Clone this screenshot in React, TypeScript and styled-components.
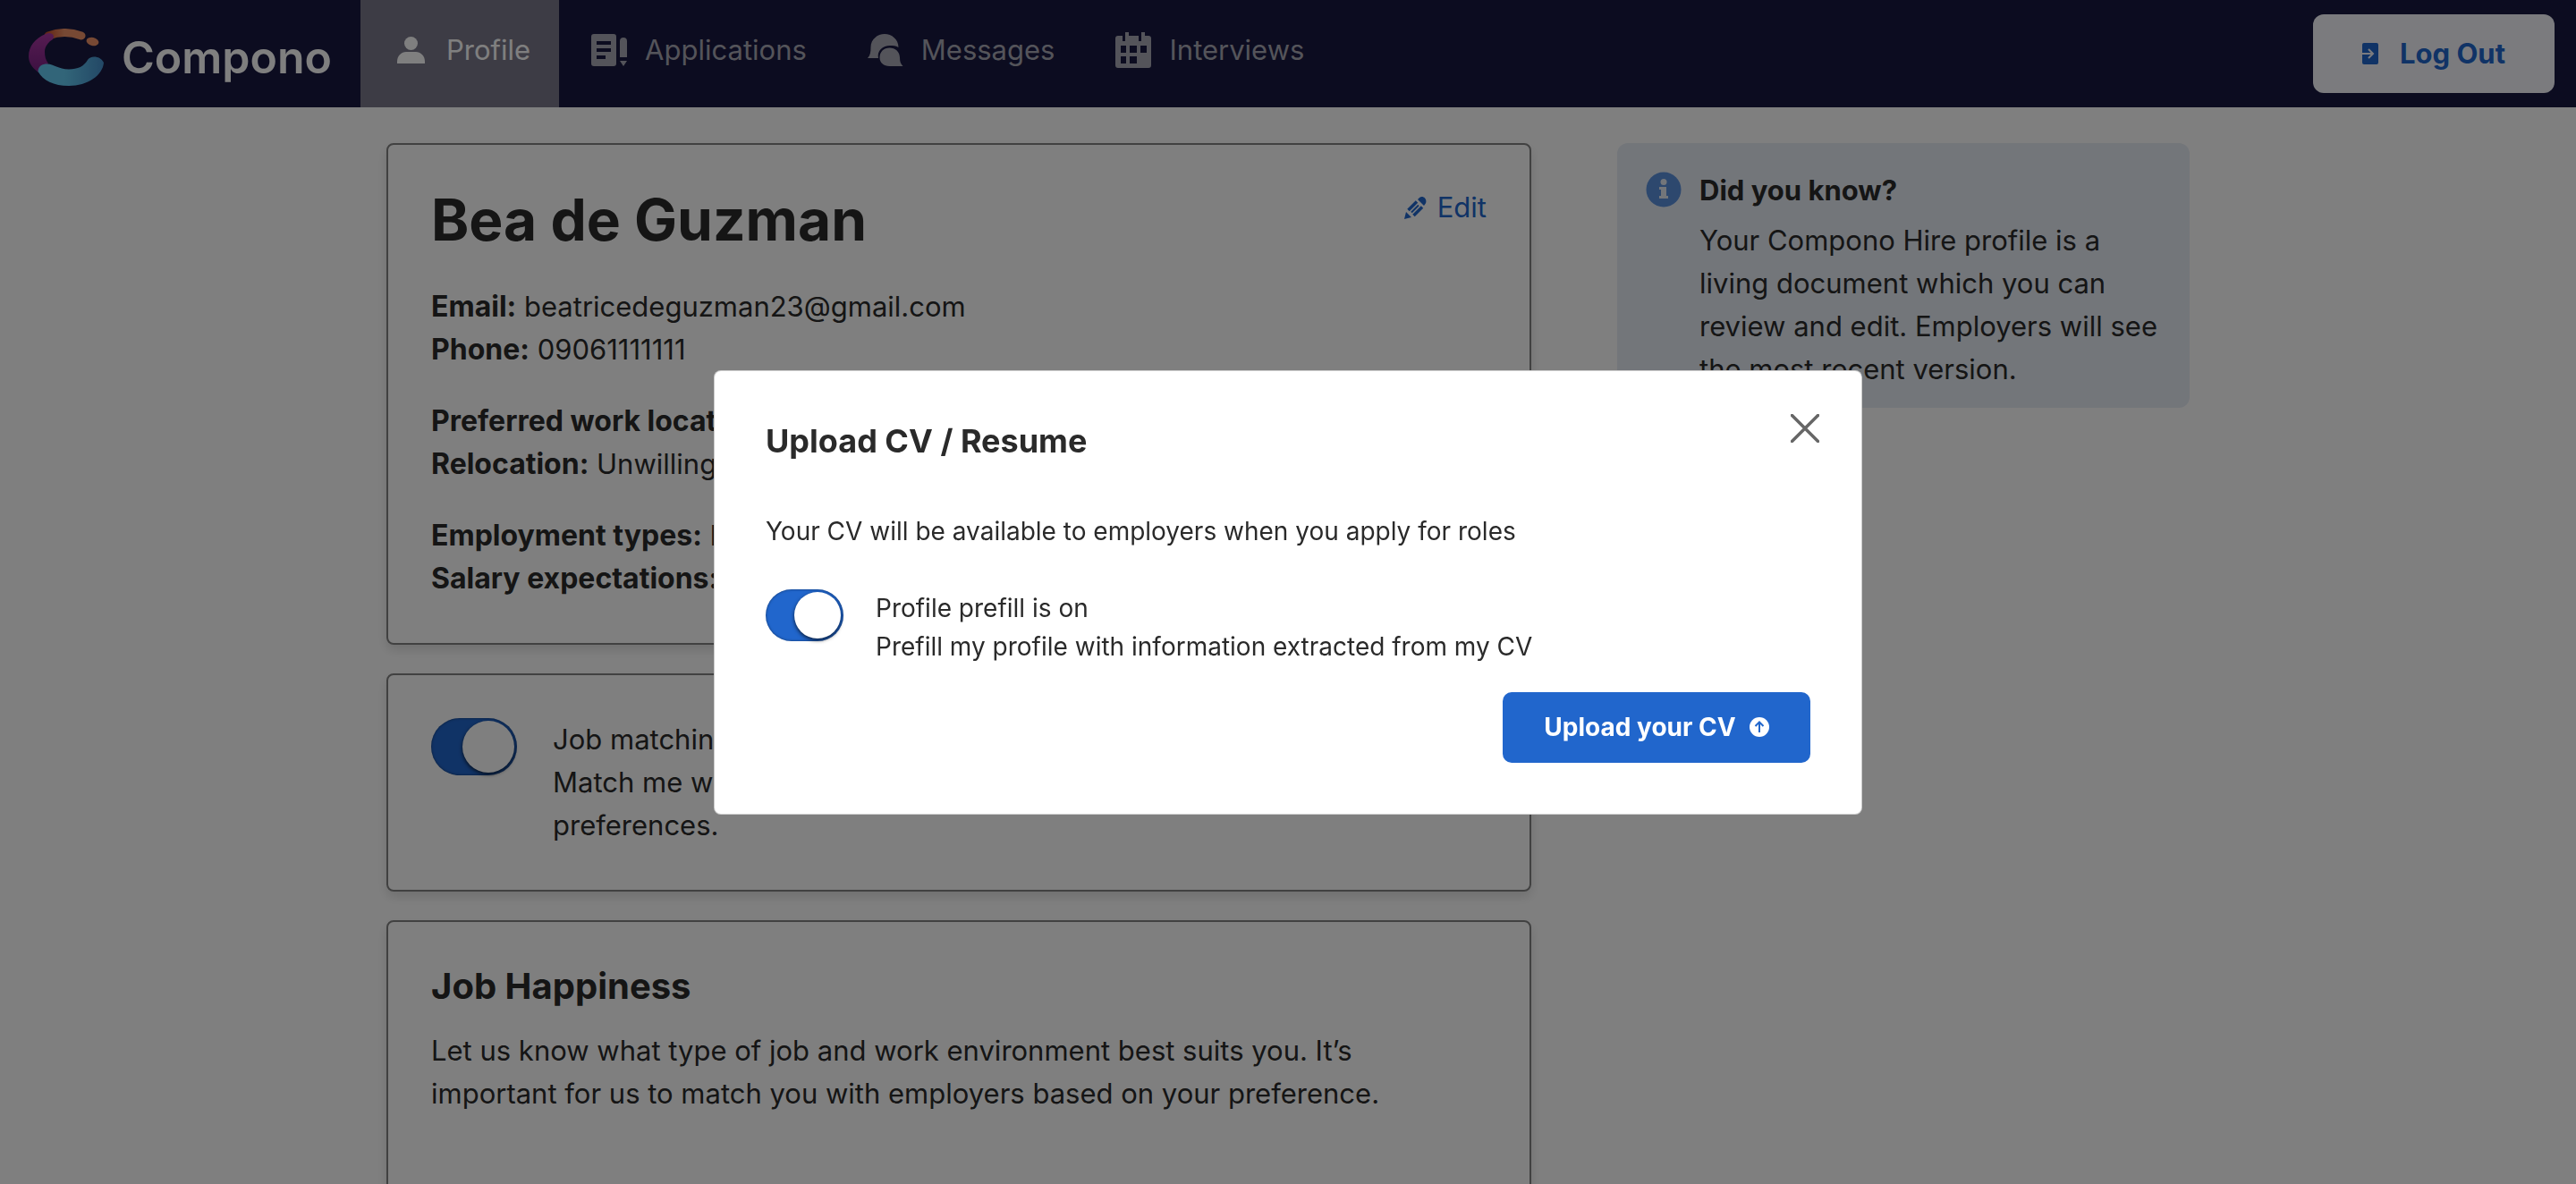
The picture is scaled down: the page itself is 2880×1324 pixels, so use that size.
import React from "react";
import styled, { createGlobalStyle } from "styled-components";

const GlobalStyle = createGlobalStyle`
  *, *::before, *::after { box-sizing: border-box; }
  body {
    margin: 0;
    height: 100vh;
    overflow: hidden;
    background: #fff;
    color: #2a2a2a;
    font-family: Inter, "Open Sans", sans-serif;
    font-size: 31px;
    line-height: 48px;
  }
  h1, h2, p { margin: 0; }
  button, input { font: inherit; margin: 0; }
`;

const Header = styled.header`
  display: flex;
  align-items: stretch;
  height: 120px;
  padding-right: 24px;
  background: #181840;
`;

const Brand = styled.a`
  display: flex;
  align-items: center;
  gap: 20px;
  padding: 8px 32px 0;
  color: #fff;
  font-size: 50px;
  font-weight: 600;
  line-height: 60px;
  text-decoration: none;
`;

const Nav = styled.nav`
  display: flex;
  flex: 1;
`;

const NavLink = styled.a<{ $active?: boolean }>`
  display: flex;
  align-items: center;
  gap: 20px;
  padding: 0 32px 8px 36px;
  color: ${(p) => (p.$active ? "#fff" : "#a9a9b4")};
  background: ${(p) => (p.$active ? "#7a788a" : "transparent")};
  text-decoration: none;
`;

const LogOut = styled.button`
  display: flex;
  align-items: center;
  align-self: center;
  justify-content: center;
  gap: 24px;
  width: 270px;
  height: 88px;
  border: 0;
  border-radius: 12px;
  background: #f6f7fc;
  color: #2166cc;
  font-weight: 700;
`;

const Main = styled.main`
  display: grid;
  grid-template-columns: 2fr 1fr;
  gap: 96px;
  align-items: start;
  width: 70%;
  margin: 0 auto;
  padding-top: 40px;
`;

const Column = styled.div`
  display: flex;
  flex-direction: column;
  gap: 32px;
`;

const Card = styled.section<{ $tall?: boolean }>`
  min-height: ${(p) => (p.$tall ? "50vh" : "0")};
  padding: 48px;
  border: 2px solid #828282;
  border-radius: 8px;
  box-shadow: 0 6px 12px rgba(0, 0, 0, 0.12);
`;

const CardHead = styled.div`
  display: flex;
  justify-content: space-between;
  align-items: flex-start;
  margin-bottom: 37px;
`;

const Name = styled.h1`
  font-size: 64px;
  line-height: 72px;
`;

const EditLink = styled.a`
  display: flex;
  align-items: center;
  gap: 12px;
  color: #2166cc;
  line-height: 44px;
  text-decoration: none;
`;

const Details = styled.p`
  & + & { margin-top: 32px; }

  strong { font-size: 32px; }
`;

const CardTitle = styled.h2`
  margin-bottom: 24px;
  font-size: 40px;
`;

const Copy = styled.p`
  max-width: 1120px;
`;

const SwitchRow = styled.div<{ $gap: number }>`
  display: flex;
  align-items: flex-start;
  gap: ${(p) => p.$gap}px;
`;

const Switch = styled.input<{ $height: number }>`
  appearance: none;
  display: flex;
  flex: none;
  justify-content: flex-end;
  width: ${(p) => p.$height * 1.5}px;
  height: ${(p) => p.$height}px;
  padding: 3px;
  border-radius: 999px;
  background: #2166cc;
  box-shadow: inset 0 0 3px rgba(0, 0, 0, 0.5);

  &::before {
    content: "";
    height: 100%;
    aspect-ratio: 1;
    border-radius: 50%;
    background: #fff;
    box-shadow: 0 2px 4px rgba(0, 0, 0, 0.7);
  }
`;

const Tip = styled.aside`
  display: flex;
  align-items: flex-start;
  gap: 20px;
  padding: 29px 32px 19px;
  border-radius: 12px;
  background: #e6ecf5;
`;

const TipIcon = styled.svg`
  flex: none;
  margin-top: 3px;
`;

const TipTitle = styled.h2`
  margin-bottom: 8px;
  font-size: 31px;
`;

const Overlay = styled.div`
  position: fixed;
  inset: 0;
  display: flex;
  align-items: center;
  justify-content: center;
  background: rgba(0, 0, 0, 0.5);
`;

const Dialog = styled.div`
  width: 1284px;
  max-width: 100%;
  padding: 57px;
  border: 1px solid rgba(0, 0, 0, 0.2);
  border-radius: 8px;
  background: #fff;
  font-size: 28px;
  line-height: 43px;
`;

const DialogHead = styled.div`
  display: flex;
  justify-content: space-between;
  margin-bottom: 58px;
`;

const DialogTitle = styled.h2`
  font-size: 36px;
`;

const Close = styled.button`
  display: flex;
  height: 32px;
  margin: -9px -10px 0 0;
  padding: 0;
  border: 0;
  background: none;
`;

const DialogText = styled.p`
  margin-bottom: 43px;
`;

const Actions = styled.div`
  display: flex;
  justify-content: flex-end;
  margin-top: 29px;
`;

const Upload = styled.button`
  display: flex;
  align-items: center;
  justify-content: center;
  gap: 15px;
  width: 344px;
  height: 79px;
  padding: 0;
  border: 0;
  border-radius: 10px;
  background: #2166cc;
  color: #fff;
  font-weight: 700;
`;

const Logo = () => (
  <svg width="84" height="64" viewBox="0 0 84 64" aria-hidden="true">
    <defs>
      <linearGradient id="orange" x1="20" x2="40" y1="0" y2="0" gradientUnits="userSpaceOnUse">
        <stop stopColor="#c84e2c" />
        <stop offset="1" stopColor="#ee9368" />
      </linearGradient>
      <linearGradient id="purple" x1="0" x2="0" y1="0" y2="1">
        <stop stopColor="#ac38a4" />
        <stop offset="1" stopColor="#7a2284" />
      </linearGradient>
      <linearGradient id="blue" x1="0" x2="1" y1="0" y2="0">
        <stop offset="0.4" stopColor="#64cbf2" />
        <stop offset="1" stopColor="#4690cc" />
      </linearGradient>
    </defs>
    <path d="M22 8Q40 1 59 8" fill="none" stroke="url(#orange)" strokeWidth="9" strokeLinecap="round" />
    <ellipse cx="71.500" cy="14.500" rx="7" ry="4.500" transform="rotate(12 71.500 14.500)" fill="#ee9368" />
    <path d="M19 6C7 11 0 20 0 31C0 38 4 44 11 49L22 39C19 35 18 31 18 26C18 20 22 15 27 12C30 8 26 3 19 6Z" fill="url(#purple)" />
    <path d="M10.500 48C10.500 42 15 39.500 21 39.500C28 39.500 33 45.500 45 45.500C55 45.500 62 42 66 35C69 30 80 30 84 38C83 52 66 64 45 64C28 64 16 58 10.500 48Z" fill="url(#blue)" />
  </svg>
);

const ProfileIcon = () => (
  <svg width="40" height="40" viewBox="0 0 40 40" fill="currentColor" aria-hidden="true">
    <circle cx="20.500" cy="12.500" r="7.500" />
    <path d="M5 35V33C5 26 10 22 15 22H26C31 22 36 26 36 33V35Z" />
  </svg>
);

const ApplicationsIcon = () => (
  <svg width="40" height="40" viewBox="0 0 40 40" fill="currentColor" aria-hidden="true">
    <path fillRule="evenodd" d="M3 2H25a3 3 0 0 1 3 3V35a3 3 0 0 1-3 3H3a3 3 0 0 1-3-3V5a3 3 0 0 1 3-3ZM6 10V14H22V10ZM6 18V22H22V18ZM6 26V30H16V26Z" />
    <path d="M32 28V10a4 4 0 0 1 8 0V28ZM32 32H40L36 38Z" />
  </svg>
);

const MessagesIcon = () => (
  <svg width="40" height="40" viewBox="0 0 40 40" fill="currentColor" aria-hidden="true">
    <path d="M34.500 17C34.500 8 27 2 19 2S3.500 8 3.500 17C3.500 22 3 26 0 29H12C10 21 17 15 25 15C29 15 31 15 34.500 17Z" />
    <path d="M13.500 28.500C13.500 22 18 17.500 24.500 17.500S36 22 36 28.500C36 33 37 35.500 39.500 38H24.500C18 38 13.500 34 13.500 28.500Z" />
  </svg>
);

const InterviewsIcon = () => (
  <svg width="40" height="40" viewBox="0 0 40 40" fill="currentColor" aria-hidden="true">
    <path fillRule="evenodd" d="M3 4H8V10H11V0H15V4H26V10H29V0H33V4H37a3 3 0 0 1 3 3V37a3 3 0 0 1-3 3H3a3 3 0 0 1-3-3V7a3 3 0 0 1 3-3ZM6 15V23H12V15ZM16 15V23H24V15ZM28 15V23H35V15ZM6 27V35H12V27ZM16 27V35H24V27Z" />
  </svg>
);

const LogOutIcon = () => (
  <svg width="18" height="24" viewBox="0 0 18 24" aria-hidden="true">
    <rect width="18" height="24" rx="2" fill="currentColor" />
    <path d="M0 12H12M7 7L12 12L7 17" fill="none" stroke="#f6f7fc" strokeWidth="2" />
  </svg>
);

const PencilIcon = () => (
  <svg width="25" height="25" viewBox="0 0 25 25" aria-hidden="true">
    <path d="M15 3L17 1C19 -.5 21.500 0 23 1.500S25 6 23.500 8L22 10ZM2 17L8 23L0 25Z" fill="currentColor" />
    <path d="M14 5.500L4.500 15M20 11.500L10.500 21" stroke="currentColor" strokeWidth="3.500" />
    <path d="M16 9.500L8 17.500" stroke="currentColor" strokeWidth="2" />
  </svg>
);

const details: [string, string][][] = [
  [["Email:", "beatricedeguzman23@gmail.com"], ["Phone:", "09061111111"]],
  [["Preferred work location:", ""], ["Relocation:", "Unwilling"]],
  [["Employment types:", "Full"], ["Salary expectations:", ""]],
];

const navItems = [
  { label: "Profile", Icon: ProfileIcon },
  { label: "Applications", Icon: ApplicationsIcon },
  { label: "Messages", Icon: MessagesIcon },
  { label: "Interviews", Icon: InterviewsIcon },
];

export default function App() {
  return (
    <>
      <GlobalStyle />
      <Header>
        <Brand href="#">
          <Logo />
          Compono
        </Brand>
        <Nav>
          {navItems.map(({ label, Icon }) => (
            <NavLink key={label} href="#" $active={label === "Profile"}>
              <Icon />
              {label}
            </NavLink>
          ))}
        </Nav>
        <LogOut type="button">
          <LogOutIcon />
          Log Out
        </LogOut>
      </Header>
      <Main>
        <Column>
          <Card>
            <CardHead>
              <Name>Bea de Guzman</Name>
              <EditLink href="#">
                <PencilIcon />
                Edit
              </EditLink>
            </CardHead>
            {details.map((group) => (
              <Details key={group[0][0]}>
                {group.map(([term, value], i) => (
                  <React.Fragment key={term}>
                    {i > 0 && <br />}
                    <strong>{term}</strong> {value}
                  </React.Fragment>
                ))}
              </Details>
            ))}
          </Card>
          <Card>
            <SwitchRow $gap={40}>
              <Switch id="matching" type="checkbox" defaultChecked $height={64} />
              <label htmlFor="matching">
                Job matching is on
                <br />
                Match me with roles that suit my skills, experience and my own job preferences.
              </label>
            </SwitchRow>
          </Card>
          <Card $tall>
            <CardTitle>Job Happiness</CardTitle>
            <Copy>
              Let us know what type of job and work environment best suits you. It’s important for us
              to match you with employers based on your preference.
            </Copy>
          </Card>
        </Column>
        <Tip>
          <TipIcon width="40" height="40" viewBox="0 0 40 40" aria-hidden="true">
            <circle cx="20" cy="20" r="19.500" fill="#5a90dc" />
            <circle cx="20" cy="11.500" r="3.500" fill="#e6ecf5" />
            <path d="M15 17H23V27H25V30H15V27H17V20H15Z" fill="#e6ecf5" />
          </TipIcon>
          <div>
            <TipTitle>Did you know?</TipTitle>
            <p>
              Your Compono Hire profile is a living document which you can review and edit. Employers
              will see the most recent version.
            </p>
          </div>
        </Tip>
      </Main>
      <Overlay>
        <Dialog role="dialog" aria-modal="true" aria-labelledby="upload-title">
          <DialogHead>
            <DialogTitle id="upload-title">Upload CV / Resume</DialogTitle>
            <Close type="button" aria-label="Close">
              <svg width="32" height="32" viewBox="0 0 32 32" aria-hidden="true">
                <path d="M1.500 1.500L30.500 30.500M30.500 1.500L1.500 30.500" stroke="#666" strokeWidth="3.500" strokeLinecap="round" />
              </svg>
            </Close>
          </DialogHead>
          <DialogText>Your CV will be available to employers when you apply for roles</DialogText>
          <SwitchRow $gap={36}>
            <Switch id="prefill" type="checkbox" defaultChecked $height={58} />
            <label htmlFor="prefill">
              Profile prefill is on
              <br />
              Prefill my profile with information extracted from my CV
            </label>
          </SwitchRow>
          <Actions>
            <Upload type="button">
              Upload your CV
              <svg width="22" height="22" viewBox="0 0 22 22" aria-hidden="true">
                <circle cx="11" cy="11" r="11" fill="#fff" />
                <path d="M11 17V5.500M6.500 10L11 5.500L15.500 10" fill="none" stroke="#2166cc" strokeWidth="2" />
              </svg>
            </Upload>
          </Actions>
        </Dialog>
      </Overlay>
    </>
  );
}
